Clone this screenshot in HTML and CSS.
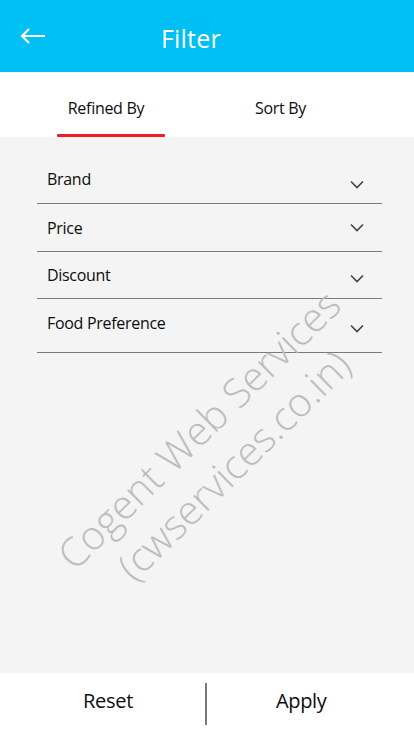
FILE: index.html
```html
<!DOCTYPE html>
<html>
<head>
<meta charset="utf-8">
<link rel="stylesheet" href="styles.css">
</head>
<body>
<div class="screen">
  <header class="topbar">
    <svg class="back" width="26" height="16" viewBox="0 0 26 16"><path d="M25 8H2M9 1L2 8l7 7" fill="none" stroke="#fff" stroke-width="2.2"/></svg>
    <h1 class="title">Filter</h1>
  </header>
  <nav class="tabs">
    <div class="tab active"><span>Refined By</span></div>
    <div class="tab">Sort By</div>
  </nav>
  <main class="content">
    <div class="row r1"><span>Brand</span><svg class="chev" width="14" height="9" viewBox="0 0 14 9"><path d="M1 1.5l6 6 6-6" fill="none" stroke="#444" stroke-width="1.6"/></svg></div>
    <div class="row r2"><span>Price</span><svg class="chev" width="14" height="9" viewBox="0 0 14 9"><path d="M1 1.5l6 6 6-6" fill="none" stroke="#444" stroke-width="1.6"/></svg></div>
    <div class="row r3"><span>Discount</span><svg class="chev" width="14" height="9" viewBox="0 0 14 9"><path d="M1 1.5l6 6 6-6" fill="none" stroke="#444" stroke-width="1.6"/></svg></div>
    <div class="row r4"><span>Food Preference</span><svg class="chev" width="14" height="9" viewBox="0 0 14 9"><path d="M1 1.5l6 6 6-6" fill="none" stroke="#444" stroke-width="1.6"/></svg></div>
    <div class="watermark">
      <div>Cogent Web Services</div>
      <div>(cwservices.co.in)</div>
    </div>
  </main>
  <footer class="footer">
    <div class="btn reset">Reset</div>
    <div class="sep"></div>
    <div class="btn apply">Apply</div>
  </footer>
</div>
</body>
</html>
```

FILE: styles.css
```css
* { box-sizing: border-box; }
html, body { margin: 0; padding: 0; }
body {
  font-family: "Open Sans", "Liberation Sans", sans-serif;
  color: #0c0c0c;
  width: 414px;
  height: 747px;
  overflow: hidden;
}
.screen {
  display: flex;
  flex-direction: column;
  height: 747px;
}
.topbar {
  height: 72px;
  background: #00bff3;
  display: flex;
  align-items: center;
  padding-left: 20px;
  flex-shrink: 0;
}
.back { display: block; margin-top: -1px; }
.title {
  margin: 4px 0 0 115px;
  font-weight: 400;
  font-size: 25px;
  color: #fff;
  letter-spacing: 0.2px;
}
.tabs {
  height: 65px;
  background: #fff;
  display: flex;
  flex-shrink: 0;
}
.tab {
  font-size: 16px;
  letter-spacing: -0.3px;
  padding-top: 25px;
  text-align: center;
  position: relative;
}
.tab.active { width: 108px; margin-left: 57px; }
.tab.active span { margin-left: -10px; }
.tab:last-child { margin-left: 90px; }
.tab.active::after {
  content: "";
  position: absolute;
  left: 0;
  right: 0;
  bottom: 0;
  height: 3px;
  border-radius: 1px;
  background: #ee1c25;
}
.content {
  flex: 1;
  background: #f4f4f4;
  padding: 18px 32px 0 37px;
  position: relative;
  overflow: hidden;
}
.row {
  border-bottom: 1px solid #7a7a7a;
  display: flex;
  justify-content: space-between;
  align-items: center;
  padding-left: 10px;
  padding-right: 18px;
  font-size: 16px;
  letter-spacing: -0.3px;
}
.row span { line-height: 20px; }
.chev { display: block; }
.r1 { height: 49px; }
.r1 .chev { margin-top: 10px; }
.r2 { height: 48px; }
.r2 .chev { margin-top: 0; }
.r3 { height: 47px; }
.r3 .chev { margin-top: 7px; }
.r4 { height: 54px; }
.r4 span { margin-top: -6px; }
.r4 .chev { margin-top: 6px; }
.watermark {
  position: absolute;
  left: -4px;
  top: 260px;
  width: 440px;
  text-align: center;
  white-space: nowrap;
  color: #bdbdbd;
  font-size: 40px;
  font-weight: 300;
  line-height: 50px;
  transform: rotate(-44.5deg);
  transform-origin: 50% 50%;
  pointer-events: none;
}
.footer {
  height: 74px;
  background: #fff;
  display: flex;
  align-items: flex-start;
  flex-shrink: 0;
}
.btn {
  text-align: center;
  font-size: 20px;
  letter-spacing: -0.3px;
  line-height: 28px;
  padding-top: 14px;
}
.reset { width: 205px; padding-left: 11px; }
.apply { flex: 1; padding-right: 18px; }
.sep {
  width: 1.5px;
  height: 42px;
  background: #777;
  margin-top: 10px;
}
```
